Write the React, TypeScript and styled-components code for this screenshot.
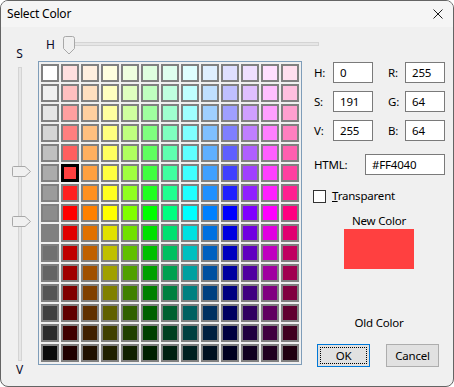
import { FC } from "react";

import styled, { createGlobalStyle } from "styled-components";

const GlobalStyle = createGlobalStyle`
  html, body {
    margin: 0;
    padding: 0;
    background: #ffffff;
  }
  body {
    font-family: "Segoe UI", "Noto Sans", "DejaVu Sans", sans-serif;
    font-size: 11.5px;
    letter-spacing: -0.2px;
    color: #000000;
  }
`;

// palette rows: top half raises saturation, bottom half lowers value
const GRAYS = [255, 240, 230, 212, 191, 171, 155, 140, 128, 112, 100, 85, 64, 42, 10];
const SATS = [32, 64, 96, 128, 160, 191, 223, 255];
const VALS = [224, 192, 160, 128, 96, 64, 32];
const HUES = [0, 30, 60, 90, 120, 150, 180, 210, 240, 270, 300, 330];

const hsv = (h: number, s: number, v: number) => {
  const c = (v * s) / 255;
  const x = c * (1 - Math.abs(((h / 60) % 2) - 1));
  const m = v - c;
  let r = 0;
  let g = 0;
  let b = 0;
  if (h < 60) [r, g, b] = [c, x, 0];
  else if (h < 120) [r, g, b] = [x, c, 0];
  else if (h < 180) [r, g, b] = [0, c, x];
  else if (h < 240) [r, g, b] = [0, x, c];
  else if (h < 300) [r, g, b] = [x, 0, c];
  else [r, g, b] = [c, 0, x];
  return `rgb(${Math.round(r + m)}, ${Math.round(g + m)}, ${Math.round(b + m)})`;
};

const cellColor = (row: number, col: number) => {
  if (col === 0) {
    const g = GRAYS[row];
    return `rgb(${g}, ${g}, ${g})`;
  }
  const hue = HUES[col - 1];
  if (row < 8) return hsv(hue, SATS[row], 255);
  return hsv(hue, 255, VALS[row - 8]);
};

const ROWS = Array.from({ length: 15 }, (_, r) => r);
const COLS = Array.from({ length: 13 }, (_, c) => c);

const HThumb: FC = () => (
  <svg width="12" height="19" viewBox="0 0 12 19">
    <path
      d="M0.5 2.5 Q0.5 0.5 2.5 0.5 H9.5 Q11.5 0.5 11.5 2.5 V12.5 L6 18 L0.5 12.5 Z"
      fill="#f0f0f0"
      stroke="#a8a8a8"
    />
  </svg>
);

const VThumb: FC = () => (
  <svg width="19" height="11" viewBox="0 0 19 11">
    <path
      d="M0.5 1.5 Q0.5 0.5 1.5 0.5 H13 L18.5 5.5 L13 10.5 H1.5 Q0.5 10.5 0.5 9.5 Z"
      fill="#f0f0f0"
      stroke="#a8a8a8"
    />
  </svg>
);

const App: FC = () => {
  return (
    <>
      <GlobalStyle />
      <Window>
        <TitleBar>
          <Title>Select Color</Title>
          <CloseBtn>
            <svg width="10" height="10" viewBox="0 0 10 10">
              <path d="M0.5 0.5 L9.5 9.5 M9.5 0.5 L0.5 9.5" stroke="#1b1b1b" strokeWidth="1" />
            </svg>
          </CloseBtn>
        </TitleBar>
        <Body>
          <LeftCol>
            <AxisLabel>S</AxisLabel>
            <VSlider>
              <VTrack />
              <VThumbBox $top={99}>
                <VThumb />
              </VThumbBox>
              <VThumbBox $top={149}>
                <VThumb />
              </VThumbBox>
            </VSlider>
            <AxisLabel>V</AxisLabel>
          </LeftCol>

          <CenterCol>
            <HRow>
              <AxisLabel>H</AxisLabel>
              <HSlider>
                <HTrack />
                <HThumbBox>
                  <HThumb />
                </HThumbBox>
              </HSlider>
            </HRow>
            <Palette>
              <Swatches>
                {ROWS.map((r) =>
                  COLS.map((c) => (
                    <Cell
                      key={`${r}-${c}`}
                      $color={cellColor(r, c)}
                      $selected={r === 5 && c === 1}
                    />
                  ))
                )}
              </Swatches>
            </Palette>
          </CenterCol>

          <RightCol>
            <Fields>
              <FieldLabel>H:</FieldLabel>
              <Field>0</Field>
              <FieldLabel>R:</FieldLabel>
              <Field>255</Field>
              <FieldLabel>S:</FieldLabel>
              <Field>191</Field>
              <FieldLabel>G:</FieldLabel>
              <Field>64</Field>
              <FieldLabel>V:</FieldLabel>
              <Field>255</Field>
              <FieldLabel>B:</FieldLabel>
              <Field>64</Field>
            </Fields>
            <HtmlRow>
              <FieldLabel>HTML:</FieldLabel>
              <Field $width={80}>#FF4040</Field>
            </HtmlRow>
            <CheckRow>
              <CheckBox />
              <span>
                <u>T</u>ransparent
              </span>
            </CheckRow>
            <Preview>
              <span>New Color</span>
              <NewSwatch />
              <OldLabel>Old Color</OldLabel>
            </Preview>
            <Buttons>
              <Button $primary>
                <FocusRect>OK</FocusRect>
              </Button>
              <Button>Cancel</Button>
            </Buttons>
          </RightCol>
        </Body>
      </Window>
    </>
  );
};

export default App;

const Window = styled.div`
  width: 454px;
  height: 387px;
  box-sizing: border-box;
  border: 1px solid #646464;
  border-radius: 8px;
  background: #f0f0f0;
  display: flex;
  flex-direction: column;
  overflow: hidden;
`;

const TitleBar = styled.div`
  height: 26px;
  display: flex;
  align-items: center;
  justify-content: space-between;
  padding: 0 10px 0 6px;
  background: #f5f5f5;
`;

const Title = styled.span`
  font-size: 12px;
  line-height: 16px;
`;

const CloseBtn = styled.div`
  width: 10px;
  height: 10px;
  display: flex;
`;

const Body = styled.div`
  flex: 1;
  display: flex;
`;

const LeftCol = styled.div`
  width: 37px;
  flex-shrink: 0;
  display: flex;
  flex-direction: column;
  align-items: center;
  padding-top: 19px;
`;

const AxisLabel = styled.span`
  line-height: 16px;
  font-size: 12px;
  color: #0a0a28;
`;

const VSlider = styled.div`
  position: relative;
  width: 20px;
  height: 292px;
  margin: 5px 0 3px;
`;

const VTrack = styled.div`
  width: 2px;
  height: 100%;
  margin: 0 auto;
  background: #e6e6e6;
  border: 1px solid #d4d4d4;
  box-sizing: content-box;
`;

const VThumbBox = styled.div<{ $top: number }>`
  position: absolute;
  left: 2px;
  top: ${(p) => p.$top}px;
  display: flex;
`;

const CenterCol = styled.div`
  width: 264px;
  flex-shrink: 0;
  display: flex;
  flex-direction: column;
  padding-top: 8px;
`;

const HRow = styled.div`
  height: 20px;
  display: flex;
  align-items: center;
  padding-left: 8px;
  margin-bottom: 6px;
`;

const HSlider = styled.div`
  position: relative;
  flex-shrink: 0;
  width: 256px;
  height: 20px;
  margin-left: 8px;
`;

const HTrack = styled.div`
  position: absolute;
  left: 0;
  right: 0;
  top: 7px;
  height: 2px;
  background: #e6e6e6;
  border: 1px solid #d4d4d4;
`;

const HThumbBox = styled.div`
  position: absolute;
  left: 0;
  top: 1px;
  display: flex;
`;

const Palette = styled.div`
  width: 258px;
  padding: 2px;
  border: 1px solid #7f9db9;
  background: #f0f0f0;
`;

const Swatches = styled.div`
  display: grid;
  grid-template-columns: repeat(13, 18px);
  grid-auto-rows: 18px;
  gap: 2px;
`;

const Cell = styled.div<{ $color: string; $selected?: boolean }>`
  box-sizing: border-box;
  background: ${(p) => p.$color};
  border: ${(p) => (p.$selected ? "3px solid #000000" : "2px solid #808080")};
`;

const RightCol = styled.div`
  flex: 1;
  display: flex;
  flex-direction: column;
  padding: 35px 0 0 11px;
`;

const Fields = styled.div`
  display: grid;
  grid-template-columns: 20px 54px 18px 40px;
  grid-auto-rows: 21px;
  row-gap: 8px;
  align-items: center;
`;

const FieldLabel = styled.span`
  line-height: 16px;
  padding-left: 1px;
`;

const Field = styled.div<{ $width?: number }>`
  box-sizing: border-box;
  width: ${(p) => p.$width ?? 40}px;
  height: 21px;
  padding: 0 6px;
  background: #ffffff;
  border: 1px solid #7a7a7a;
  line-height: 19px;
`;

const HtmlRow = styled.div`
  display: flex;
  align-items: center;
  justify-content: space-between;
  width: 132px;
  margin-top: 13px;
`;

const CheckRow = styled.div`
  display: flex;
  align-items: center;
  gap: 6px;
  margin-top: 13px;
  line-height: 16px;
`;

const CheckBox = styled.div`
  box-sizing: border-box;
  width: 13px;
  height: 13px;
  background: #ffffff;
  border: 1px solid #333333;
`;

const Preview = styled.div`
  width: 132px;
  display: flex;
  flex-direction: column;
  align-items: center;
  margin-top: 9px;
  line-height: 16px;
`;

const NewSwatch = styled.div`
  width: 70px;
  height: 40px;
  background: #ff4040;
`;

const OldLabel = styled.span`
  margin-top: 46px;
`;

const Buttons = styled.div`
  display: flex;
  gap: 16px;
  margin: 13px 0 0 4px;
`;

const Button = styled.div<{ $primary?: boolean }>`
  box-sizing: border-box;
  width: 53px;
  height: 23px;
  display: flex;
  align-items: center;
  justify-content: center;
  padding: 2px;
  background: #e1e1e1;
  border: 1px solid ${(p) => (p.$primary ? "#0078d7" : "#adadad")};
`;

const FocusRect = styled.span`
  box-sizing: border-box;
  width: 100%;
  height: 100%;
  display: flex;
  align-items: center;
  justify-content: center;
  border: 1px dotted #000000;
`;
